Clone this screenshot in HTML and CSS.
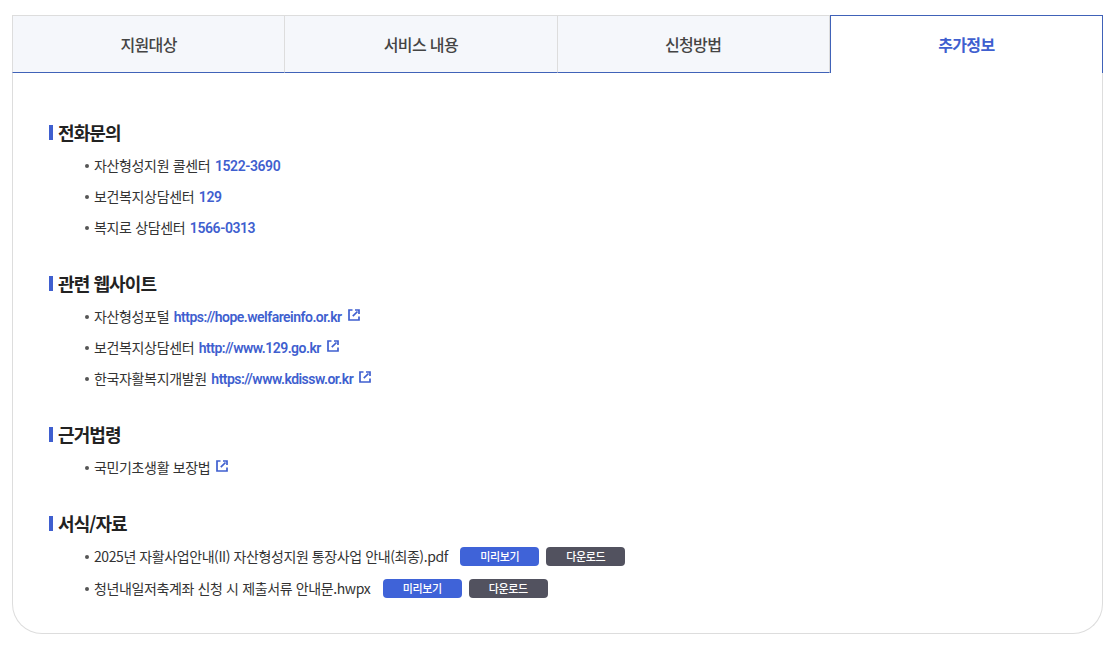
FILE: index.html
```html
<!DOCTYPE html>
<html lang="ko">
<head>
  <meta charset="UTF-8">
  <meta name="viewport" content="width=device-width, initial-scale=1.0">
  <title>추가정보</title>
  <link rel="stylesheet" href="styles.css">
</head>
<body>
  <svg class="sprite" aria-hidden="true">
    <symbol id="icon-link" viewBox="0 0 12 12">
      <path d="M4.5 1H1v10h10V7.5" />
      <path d="M4.8 7.2L9.5 2.5" />
      <path d="M7 1h4v4" />
    </symbol>
  </svg>

  <div class="tab-box">
    <ul class="tab-list">
      <li class="tab"><a href="#">지원대상</a></li>
      <li class="tab"><a href="#">서비스 내용</a></li>
      <li class="tab"><a href="#">신청방법</a></li>
      <li class="tab active"><a href="#">추가정보</a></li>
    </ul>

    <div class="tab-content">
      <section class="info">
        <h3>전화문의</h3>
        <ul class="info-list">
          <li>자산형성지원 콜센터 <a href="tel:1522-3690" class="link">1522-3690</a></li>
          <li>보건복지상담센터 <a href="tel:129" class="link">129</a></li>
          <li>복지로 상담센터 <a href="tel:1566-0313" class="link">1566-0313</a></li>
        </ul>
      </section>

      <section class="info">
        <h3>관련 웹사이트</h3>
        <ul class="info-list">
          <li>자산형성포털 <a href="https://hope.welfareinfo.or.kr" class="link site">https://hope.welfareinfo.or.kr<svg class="icon"><use href="#icon-link" /></svg></a></li>
          <li>보건복지상담센터 <a href="http://www.129.go.kr" class="link site">http://www.129.go.kr<svg class="icon"><use href="#icon-link" /></svg></a></li>
          <li>한국자활복지개발원 <a href="https://www.kdissw.or.kr" class="link site">https://www.kdissw.or.kr<svg class="icon"><use href="#icon-link" /></svg></a></li>
        </ul>
      </section>

      <section class="info">
        <h3>근거법령</h3>
        <ul class="info-list">
          <li><a href="#" class="law">국민기초생활 보장법<svg class="icon"><use href="#icon-link" /></svg></a></li>
        </ul>
      </section>

      <section class="info">
        <h3>서식/자료</h3>
        <ul class="info-list file-list">
          <li>
            <span class="file">2025년 자활사업안내(II) 자산형성지원 통장사업 안내(최종).pdf</span>
            <button type="button" class="btn preview">미리보기</button>
            <button type="button" class="btn download">다운로드</button>
          </li>
          <li>
            <span class="file">청년내일저축계좌 신청 시 제출서류 안내문.hwpx</span>
            <button type="button" class="btn preview">미리보기</button>
            <button type="button" class="btn download">다운로드</button>
          </li>
        </ul>
      </section>
    </div>
  </div>
</body>
</html>
```
FILE: styles.css
```css
* {
  box-sizing: border-box;
}

body {
  margin: 0;
  padding: 15px 14px 0 12px;
  font-family: "Noto Sans CJK KR", sans-serif;
  font-size: 14px;
  letter-spacing: -0.025em;
  color: #333;
  background: #fff;
}

ul {
  margin: 0;
  padding: 0;
  list-style: none;
}

a {
  color: inherit;
  text-decoration: none;
}

.sprite {
  display: none;
}

.tab-box {
  height: 619px;
  border: 1px solid #ddd;
  border-top: none;
  border-radius: 0 0 30px 30px;
}

.tab-list {
  display: flex;
  height: 58px;
  margin: 0 -1px;
}

.tab {
  flex: 1;
  border: 1px solid #ddd;
  border-left: none;
  border-bottom-color: #4062b8;
  background: #f5f7fb;
}

.tab:first-child {
  border-left: 1px solid #ddd;
}

.tab a {
  display: block;
  font-size: 16px;
  font-weight: 500;
  line-height: 56px;
  letter-spacing: -0.04em;
  text-align: center;
  color: #444;
}

.tab.active {
  border: 1px solid #4062b8;
  border-bottom: none;
  background: #fff;
}

.tab.active a {
  font-weight: 700;
  color: #3f5fcf;
}

.tab-content {
  padding: 46px 36px 0;
}

.info {
  margin-bottom: 27px;
}

.info h3 {
  display: flex;
  align-items: center;
  height: 27px;
  margin: 0 0 4px;
  font-size: 18px;
  font-weight: 700;
  line-height: 27px;
  letter-spacing: -0.05em;
  color: #222;
}

.info h3::before {
  content: "";
  width: 4px;
  height: 15px;
  margin-right: 5px;
  background: #3f5fcf;
}

.info-list li {
  display: flex;
  align-items: center;
  height: 31px;
  padding-left: 36px;
  line-height: 31px;
  white-space: pre;
}

.info-list li::before {
  content: "";
  width: 4px;
  height: 4px;
  margin: 1px 5px 0 0;
  border-radius: 50%;
  background: #555;
}

.file-list li + li {
  margin-top: 1px;
}

.link {
  margin: 2px 0 0 1px;
  font-family: Roboto, sans-serif;
  font-weight: 600;
  letter-spacing: -0.03em;
  color: #3f5fcf;
}

.site {
  letter-spacing: -0.037em;
}

.icon {
  width: 12px;
  height: 12px;
  margin-left: 6px;
  vertical-align: 1px;
  fill: none;
  stroke: #3f5fcf;
  stroke-width: 1.7;
}

.file {
  margin-right: 12.5px;
  letter-spacing: -0.03em;
}

.file-list li + li .file {
  letter-spacing: -0.027em;
}

.btn {
  width: 79px;
  height: 19px;
  margin-right: 7px;
  padding: 0;
  border: none;
  border-radius: 4px;
  font-family: inherit;
  font-size: 11px;
  font-weight: 500;
  line-height: 19px;
  letter-spacing: inherit;
  color: #fff;
  cursor: pointer;
}

.preview {
  background: #3f63d8;
}

.download {
  background: #52525f;
}
```
